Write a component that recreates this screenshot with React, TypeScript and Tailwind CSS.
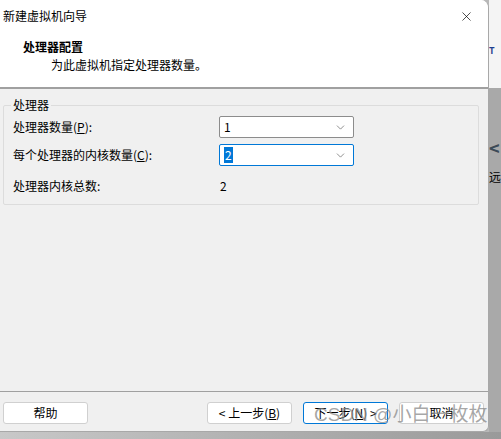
import { ChevronDown, X } from 'lucide-react';

const font = { fontFamily: '"Noto Sans CJK SC", "Liberation Sans", sans-serif' };

const Combo = ({ value, focused }: { value: string; focused?: boolean }) => (
  <div
    className={`flex h-[22px] w-[135px] items-center justify-between rounded-[2px] border bg-white pl-[4px] pr-[6px] ${
      focused ? 'border-[#0078d7]' : 'border-[#8c8c8c]'
    }`}
  >
    {focused ? (
      <span className="bg-[#0078d7] px-[1px] leading-[16px] text-white">{value}</span>
    ) : (
      <span className="leading-[16px]">{value}</span>
    )}
    <ChevronDown size={13} strokeWidth={1.2} className="text-[#555]" />
  </div>
);

const Btn = ({ children, primary }: { children: React.ReactNode; primary?: boolean }) => (
  <button
    className={`flex h-[22px] w-[85px] items-center justify-center rounded-[3px] border bg-white text-[12px] text-black ${
      primary ? 'border-[#0078d7]' : 'border-[#d0d0d0]'
    }`}
  >
    {children}
  </button>
);

export default function App() {
  return (
    <div className="relative flex h-[439px] w-[501px] flex-col bg-[#b8b8b8] text-[12px] text-black" style={font}>
      <div className="flex h-[432px]">
        {/* wizard window */}
        <div className="flex h-[432px] w-[492px] flex-col overflow-hidden rounded-tr-[8px] rounded-br-[6px] border-r border-b border-[#a8a8a8] bg-[#f0f0f0]">
          <div className="flex h-[89px] flex-col border-b-2 border-[#a0a0a0] bg-white">
            <div className="flex h-[32px] items-center justify-between pl-[3px] pr-[14px]">
              <span className="text-[12px]">新建虚拟机向导</span>
              <X size={15} strokeWidth={1.1} />
            </div>
            <div className="pl-[23px] pt-[7px] text-[12px] font-bold leading-[16px]">处理器配置</div>
            <div className="pl-[51px] pt-[2px] leading-[16px]">为此虚拟机指定处理器数量。</div>
          </div>

          <div className="flex flex-1 flex-col px-[3px] pt-[9px]">
            <fieldset className="mr-[6px] h-[107px] rounded-[2px] border border-[#dcdcdc] px-[9px] pt-0">
              <legend className="ml-[-2px] px-[2px] leading-[14px]">处理器</legend>
              <div className="grid grid-cols-[206px_1fr] items-center gap-y-[6px] pt-[4px]">
                <span>处理器数量(<u>P</u>):</span>
                <Combo value="1" />
                <span>每个处理器的内核数量(<u>C</u>):</span>
                <Combo value="2" focused />
                <span className="pt-[5px]">处理器内核总数:</span>
                <span className="pt-[5px] pl-[1px]">2</span>
              </div>
            </fieldset>
          </div>

          <div className="flex h-[40px] items-center border-t border-[#a0a0a0] px-[3px] pt-[2px]">
            <Btn>帮助</Btn>
            <div className="ml-auto flex gap-[11px] pr-[1px]">
              <Btn>&lt; 上一步(<u>B</u>)</Btn>
              <Btn primary>下一步(<u>N</u>) &gt;</Btn>
              <Btn>取消</Btn>
            </div>
          </div>
        </div>

        {/* desktop behind the window */}
        <div className="flex flex-1 flex-col">
          <div className="flex h-[88px] flex-col bg-[#f4f4f4] pt-[46px]">
            <span className="text-[9px] font-bold leading-[10px] text-[#1f3f8f]">T</span>
          </div>
          <div className="flex flex-1 flex-col bg-[#a9a9a9] pt-[50px]">
            <span className="text-[18px] font-bold leading-[18px] text-[#3c4a57]">&lt;</span>
            <span className="mt-[12px] text-[12px]">远</span>
          </div>
        </div>
      </div>
      <div className="flex-1 bg-gradient-to-r from-[#c8c8c8] to-[#9a9a9a]" />

      {/* watermark */}
      <div className="pointer-events-none absolute left-[314px] top-[402px] text-[19px] leading-[26px] text-[#8a8a8a]/75" style={{ fontFamily: '"Liberation Sans", "Noto Sans CJK SC", sans-serif' }}>
        CSDN @小白一枚枚
      </div>
    </div>
  );
}
